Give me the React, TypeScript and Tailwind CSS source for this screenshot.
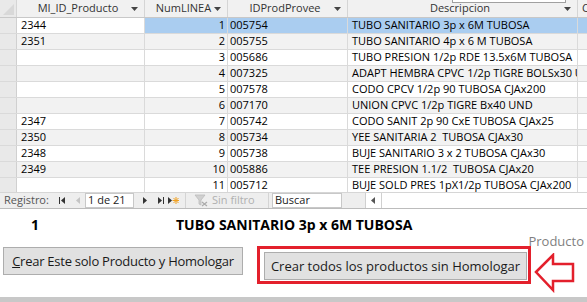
import React from "react";

type Row = { id: string; n: number; prov: string; desc: string };

const ROWS: Row[] = [
  { id: "2344", n: 1, prov: "005754", desc: "TUBO SANITARIO 3p x 6M TUBOSA" },
  { id: "2351", n: 2, prov: "005755", desc: "TUBO SANITARIO 4p x 6 M TUBOSA" },
  { id: "", n: 3, prov: "005686", desc: "TUBO PRESION 1/2p RDE 13.5x6M TUBOSA" },
  { id: "", n: 4, prov: "007325", desc: "ADAPT HEMBRA CPVC 1/2p TIGRE BOLSx30 UND" },
  { id: "", n: 5, prov: "007578", desc: "CODO CPCV 1/2p 90 TUBOSA CJAx200" },
  { id: "", n: 6, prov: "007170", desc: "UNION CPVC 1/2p TIGRE Bx40 UND" },
  { id: "2347", n: 7, prov: "005742", desc: "CODO SANIT 2p 90 CxE TUBOSA CJAx25" },
  { id: "2350", n: 8, prov: "005734", desc: "YEE SANITARIA 2\u00a0 TUBOSA CJAx30" },
  { id: "2348", n: 9, prov: "005738", desc: "BUJE SANITARIO 3 x 2 TUBOSA CJAx30" },
  { id: "2349", n: 10, prov: "005886", desc: "TEE PRESION 1.1/2\u00a0 TUBOSA CJAx20" },
  { id: "", n: 11, prov: "005712", desc: "BUJE SOLD PRES 1pX1/2p TUBOSA CJAx200" },
];

function DropArrow() {
  return (
    <svg width="7" height="4" viewBox="0 0 7 4" className="shrink-0">
      <path d="M0 0h7L3.5 4z" fill="#444" />
    </svg>
  );
}

function HeaderCell({ label, w }: { label: string; w: string }) {
  return (
    <div className={`${w} shrink-0 h-full border-r border-[#d5d5d5] flex items-center pl-2 pr-[6px]`}>
      <span className="flex-1 text-center text-[#333]">{label}</span>
      <DropArrow />
    </div>
  );
}

function NavIcon({ kind, dim }: { kind: "first" | "prev" | "next" | "last" | "new"; dim?: boolean }) {
  const c = dim ? "#c4c4c4" : "#333";
  return (
    <svg width="12" height="9" viewBox="0 0 12 9" className="shrink-0">
      {kind === "first" && (
        <>
          <rect x="3" y="1" width="1" height="7" fill={c} />
          <path d="M9 1v7L5 4.5z" fill={c} />
        </>
      )}
      {kind === "prev" && <path d="M8 1v7L4 4.5z" fill={c} />}
      {kind === "next" && <path d="M4 1v7l4-3.5z" fill={c} />}
      {kind === "last" && (
        <>
          <path d="M3 1v7l4-3.5z" fill={c} />
          <rect x="8" y="1" width="1" height="7" fill={c} />
        </>
      )}
      {kind === "new" && (
        <>
          <path d="M1 1v7l4-3.5z" fill={c} />
          <path d="M9 1v7M5.5 4.5h7M6.5 2l5 5M11.5 2l-5 5" stroke="#f0a020" strokeWidth="1" />
        </>
      )}
    </svg>
  );
}

function Button({ children, className }: { children: React.ReactNode; className?: string }) {
  return (
    <button
      className={`h-[28px] bg-[#e1e1e1] border border-[#adadad] text-[13px] text-[#1a1a1a] px-0 leading-none whitespace-nowrap ${className ?? ""}`}
    >
      {children}
    </button>
  );
}

export default function App() {
  return (
    <div className="w-[587px] h-[302px] bg-white overflow-hidden flex flex-col font-['Open_Sans',sans-serif] text-[11px] text-black">
      {/* datasheet */}
      <div className="h-[209px] shrink-0 flex flex-col border-b border-[#bcbcbc] relative">
        <div className="absolute left-[452px] top-0 w-[114px] h-[3px] border-x border-b border-[#a0a0a0] bg-white z-10" />
        <div className="h-[18px] flex border-b border-[#c8c8c8] bg-[#f1f1f1] shrink-0">
          <div className="w-[17px] shrink-0 h-full border-r border-[#d5d5d5] bg-[#e9e9e9] flex items-end justify-end p-[2px]">
            <svg width="11" height="11" viewBox="0 0 11 11">
              <path d="M11 0v11H0z" fill="#d8d8d8" />
            </svg>
          </div>
          <HeaderCell label="MI_ID_Producto" w="w-[128px]" />
          <HeaderCell label="NumLINEA" w="w-[83px]" />
          <HeaderCell label="IDProdProvee" w="w-[120px]" />
          <HeaderCell label="Descripcion" w="w-[230px]" />
          <div className="flex-1 h-full pl-[4px] flex items-center text-[#333] overflow-hidden">C</div>
        </div>
        <div className="flex-1 overflow-hidden">
          {ROWS.map((r, i) => {
            const sel = i === 0;
            const bg = sel ? "bg-[#aacdf0]" : i % 2 === 1 ? "bg-[#f2f2f2]" : "bg-white";
            return (
              <div key={r.n} className="h-[16px] flex border-b border-[#dadada]">
                <div className="w-[17px] shrink-0 h-full bg-[#e9e9e9] border-r border-[#d0d0d0]" />
                <div className={`w-[128px] shrink-0 h-full border-r border-[#dadada] pl-[4px] flex items-center ${sel ? "bg-white" : bg}`}>
                  {r.id}
                </div>
                <div className={`w-[83px] shrink-0 h-full border-r border-[#dadada] pr-[2px] flex items-center justify-end ${bg}`}>
                  {r.n}
                </div>
                <div className={`w-[120px] shrink-0 h-full border-r border-[#dadada] pl-[2px] flex items-center ${bg}`}>
                  {r.prov}
                </div>
                <div className={`w-[230px] shrink-0 h-full border-r border-[#dadada] pl-[4px] flex items-center whitespace-nowrap overflow-hidden ${bg}`}>
                  {r.desc}
                </div>
                <div className={`flex-1 h-full ${bg}`} />
              </div>
            );
          })}
        </div>
        {/* record navigation */}
        <div className="h-[16px] shrink-0 flex items-center bg-[#eeeeee] border-t border-[#d6d6d6] text-[#555]">
          <span className="pl-[4px] w-[56px]">Registro:</span>
          <NavIcon kind="first" />
          <span className="w-[4px]" />
          <NavIcon kind="prev" dim />
          <div className="w-[49px] h-[15px] bg-white border border-[#c8c8c8] text-[#222] pl-[2px] flex items-center ml-[1px]">1 de 21</div>
          <span className="w-[5px]" />
          <NavIcon kind="next" />
          <span className="w-[4px]" />
          <NavIcon kind="last" />
          <NavIcon kind="new" />
          <span className="w-[6px]" />
          <div className="w-px h-full bg-[#d4d4d4]" />
          <span className="w-[8px]" />
          <svg width="14" height="13" viewBox="0 0 14 13" className="shrink-0">
            <path d="M1 1h10L7 6v5L5 10V6z" fill="#d0d0d0" stroke="#bbb" strokeWidth="0.8" />
            <path d="M8 8l5 4M13 8l-5 4" stroke="#aaa" strokeWidth="1.2" />
          </svg>
          <span className="pl-[4px] text-[#b0b0b0] w-[60px]">Sin filtro</span>
          <div className="w-px h-full bg-[#d4d4d4]" />
          <div className="w-[70px] h-[15px] ml-[3px] bg-white border border-[#c8c8c8] text-[#222] pl-[2px] flex items-center">Buscar</div>
          <div className="w-[24px] h-full border-r border-[#d0d0d0]" />
          <div className="w-[16px] h-full bg-white border-r border-[#d0d0d0] flex items-center justify-center">
            <svg width="5" height="7" viewBox="0 0 5 7">
              <path d="M4 0v7L0 3.5z" fill="#555" />
            </svg>
          </div>
          <div className="flex-1 h-full bg-white" />
        </div>
      </div>

      {/* form area */}
      <div className="flex-1 flex flex-col relative">
        <div className="flex items-center h-[14px] mt-[8px] text-[14px] font-bold text-black">
          <span className="w-[31px]" />
          <span className="w-[145px]">1</span>
          <span>TUBO SANITARIO 3p x 6M TUBOSA</span>
        </div>
        <div className="flex justify-end pr-[3px] mt-[4px] h-[14px] items-center text-[13px] text-[#7f7f7f]">Producto</div>
        <div className="flex items-start mt-[-3px]">
          <Button className="ml-[3px] mt-[1px] w-[240px] tracking-[-0.25px]">
            <span className="underline">C</span>rear Este solo Producto y Homologar
          </Button>
          <div className="ml-[14px] w-[274px] h-[38px] border-[3px] border-[#e3202c] pl-[4px] pt-[3px]">
            <Button className="w-[263px]">Crear todos los productos sin Homologar</Button>
          </div>
          <svg width="42" height="40" viewBox="0 0 42 40" className="ml-[3px] mt-[7px]">
            <path d="M2 19L19 2v9h20v17H19v9z" fill="white" stroke="#e3202c" strokeWidth="2.5" strokeLinejoin="miter" />
          </svg>
        </div>
        <div className="absolute left-0 right-0 bottom-0 h-[5px] bg-[#c8c8c8]" />
      </div>
    </div>
  );
}
